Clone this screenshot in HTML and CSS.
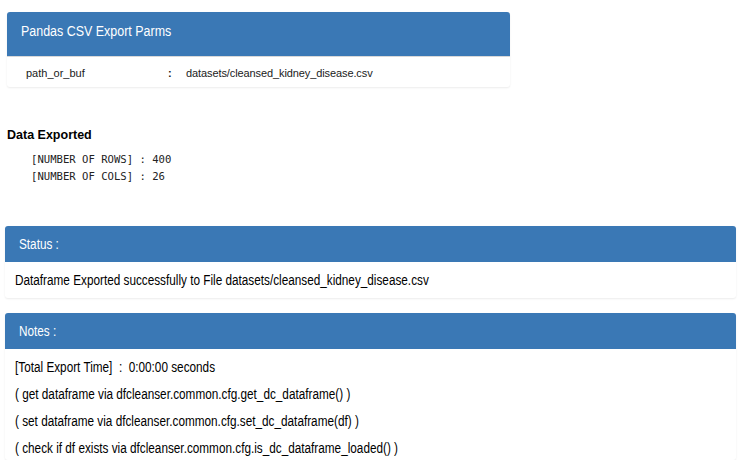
FILE: index.html
```html
<!DOCTYPE html>
<html>
<head>
<meta charset="utf-8">
<link rel="stylesheet" href="styles.css">
</head>
<body>
<div class="page">
  <div class="panel parms">
    <div class="panel-head parms-head"><span class="cond cond-title">Pandas CSV Export Parms</span></div>
    <div class="parms-row">
      <span class="p-key">path_or_buf</span>
      <span class="p-colon">:</span>
      <span class="p-val">datasets/cleansed_kidney_disease.csv</span>
    </div>
  </div>

  <div class="exported">
    <div class="exp-title">Data Exported</div>
    <pre class="exp-pre">[NUMBER OF ROWS] : 400
[NUMBER OF COLS] : 26</pre>
  </div>

  <div class="panel wide status">
    <div class="panel-head wide-head"><span class="cond">Status :</span></div>
    <div class="wide-body"><div class="line"><span class="cond">Dataframe Exported successfully to File datasets/cleansed_kidney_disease.csv</span></div></div>
  </div>

  <div class="panel wide notes">
    <div class="panel-head wide-head"><span class="cond">Notes :</span></div>
    <div class="wide-body">
      <div class="line"><span class="cond">[Total Export Time]&nbsp; :&nbsp; 0:00:00 seconds</span></div>
      <div class="line"><span class="cond">( get dataframe via dfcleanser.common.cfg.get_dc_dataframe() )</span></div>
      <div class="line"><span class="cond">( set dataframe via dfcleanser.common.cfg.set_dc_dataframe(df) )</span></div>
      <div class="line"><span class="cond">( check if df exists via dfcleanser.common.cfg.is_dc_dataframe_loaded() )</span></div>
    </div>
  </div>
</div>
</body>
</html>
```
FILE: styles.css
```css
html, body {
  margin: 0;
  padding: 0;
  background: #ffffff;
}
body {
  font-family: "Liberation Sans", Arial, sans-serif;
  color: #000;
}
.page {
  display: flex;
  flex-direction: column;
  padding: 12px 13px 0 5px;
}
.panel {
  background: #fff;
  border-radius: 3px;
  box-shadow: 0 1px 2px rgba(0,0,0,0.08);
  overflow: hidden;
}
.panel-head {
  background: #3a78b5;
  color: #fff;
}
.parms {
  width: 503px;
  margin-left: 2px;
}
.parms-head {
  height: 45px;
  box-sizing: border-box;
  padding: 10px 14px;
  font-size: 14px;
  line-height: 18px;
  border-bottom: 1px solid #d8d8d8;
}
.parms-row {
  height: 29px;
  display: flex;
  align-items: center;
  font-size: 11px;
  color: #1a1a1a;
  padding-top: 1px;
}
.p-key {
  width: 142px;
  padding-left: 19px;
}
.p-colon {
  width: 18px;
  font-weight: bold;
}
.p-val {
  letter-spacing: -0.1px;
}
.exported {
  margin-top: 40px;
  margin-left: 2px;
}
.exp-title {
  font-size: 12.5px;
  font-weight: bold;
  line-height: 16px;
}
.exp-pre {
  margin: 8px 0 0 24px;
  font-family: "DejaVu Sans Mono", monospace;
  font-size: 10.6px;
  line-height: 17px;
  color: #222;
}
.status {
  margin-top: 41px;
}
.wide {
  width: 731px;
}
.wide-head {
  height: 36px;
  box-sizing: border-box;
  padding: 9px 14px;
  font-size: 14px;
  line-height: 18px;
}
.cond {
  display: inline-block;
  transform: scaleX(0.84);
  transform-origin: left center;
  white-space: nowrap;
}
.cond-title {
  transform: scaleX(0.89);
}
.wide-body {
  padding: 9px 10px 0;
  font-size: 14px;
}
.line {
  height: 27px;
  line-height: 18px;
}
.notes {
  margin-top: 15px;
}
.notes .wide-body {
  padding-top: 9px;
}
.notes .line:last-child {
  height: 21px;
}
```
